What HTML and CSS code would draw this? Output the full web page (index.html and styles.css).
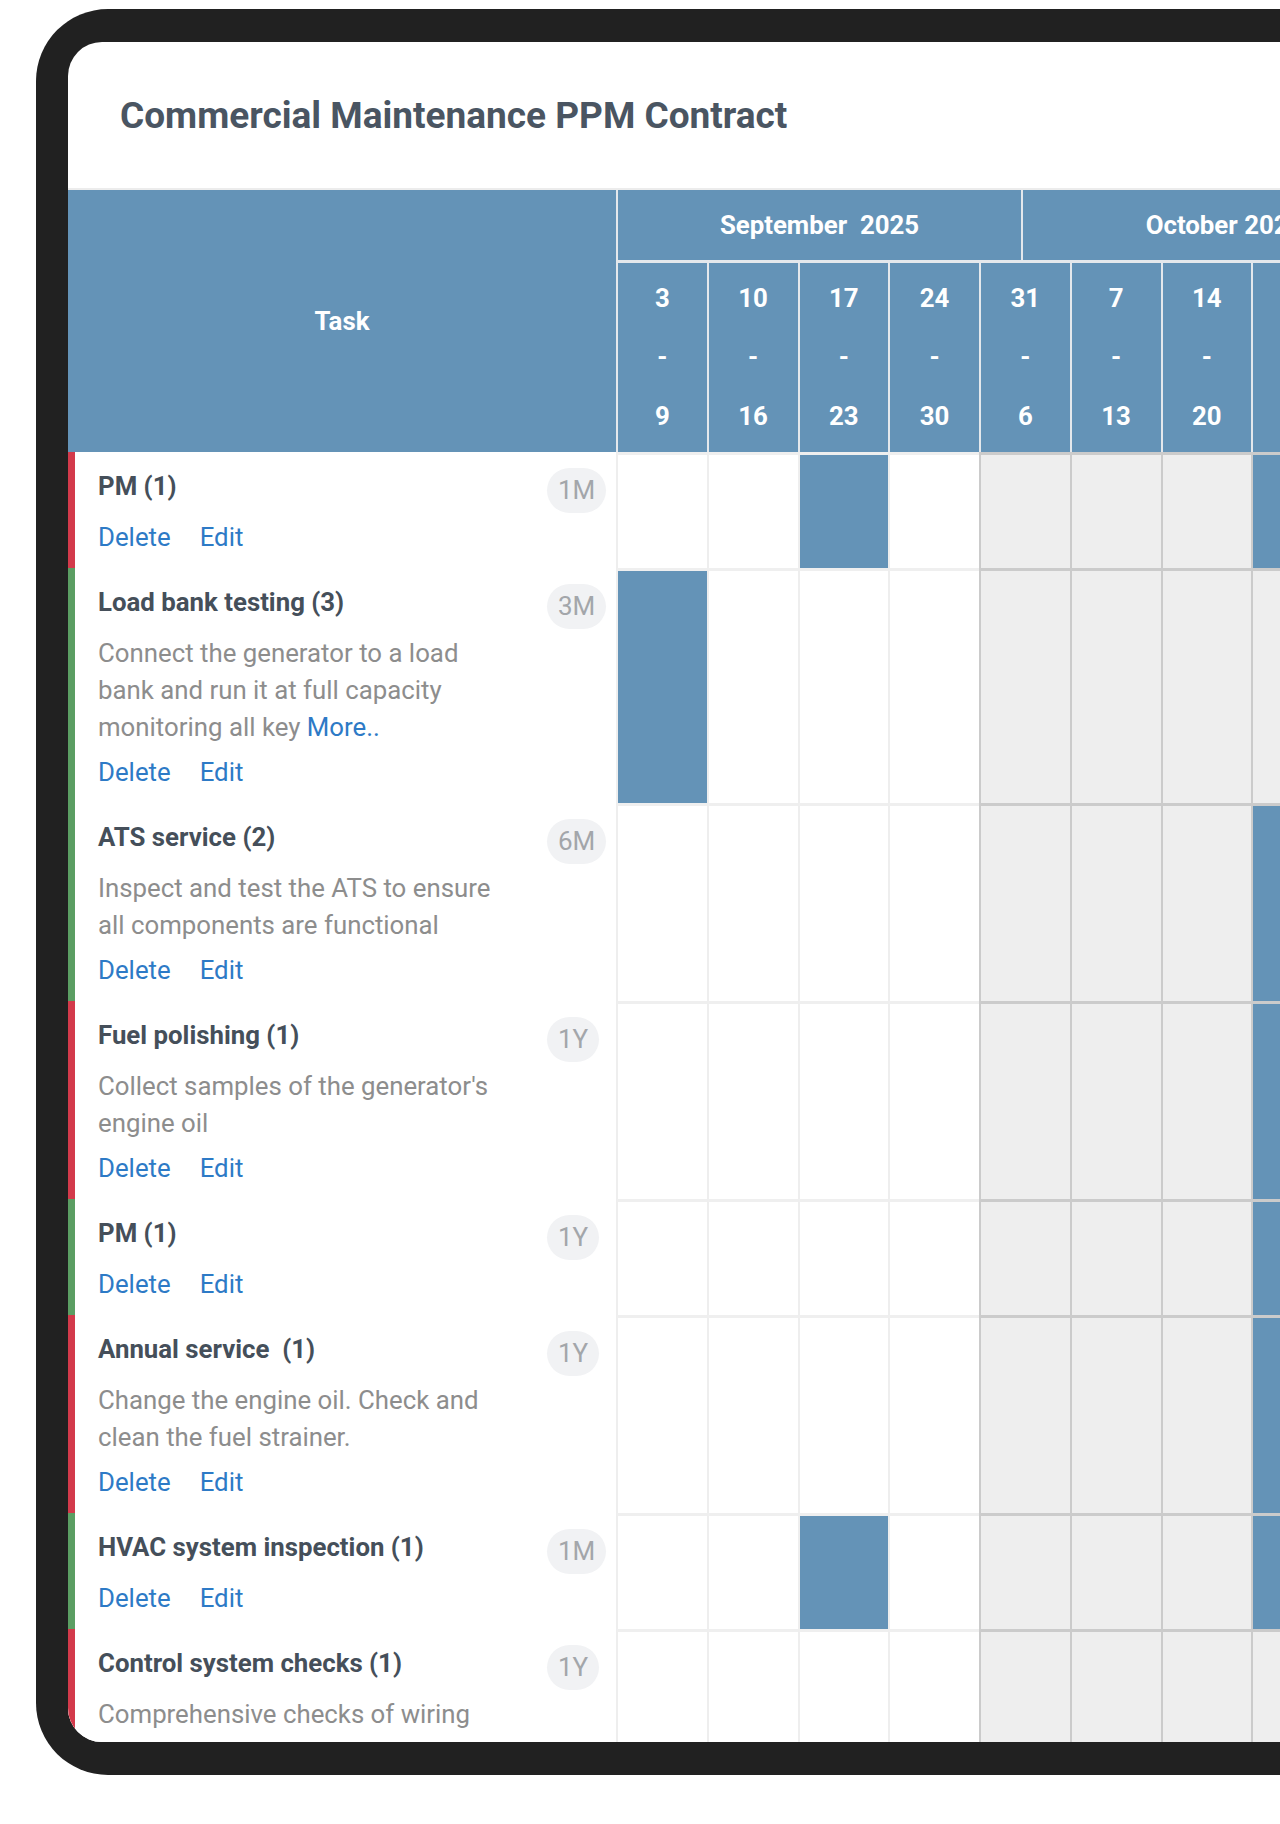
FILE: index.html
```html
<!DOCTYPE html>
<html lang="en">
<head>
<meta charset="utf-8">
<title>Commercial Maintenance PPM Contract</title>
<link rel="stylesheet" href="styles.css">
</head>
<body>
<div class="device">
  <div class="screen">
    <h1 class="title">Commercial Maintenance PPM Contract</h1>
    <div class="gantt">
      <div class="task-head">Task</div>
      <div class="months">
        <div class="month">September&nbsp; 2025</div>
        <div class="month">October 2025</div>
      </div>
      <div class="week">3<br>-<br>9</div>
      <div class="week">10<br>-<br>16</div>
      <div class="week">17<br>-<br>23</div>
      <div class="week">24<br>-<br>30</div>
      <div class="week">31<br>-<br>6</div>
      <div class="week">7<br>-<br>13</div>
      <div class="week">14<br>-<br>20</div>
      <div class="week">21<br>-<br>27</div>

      <!-- Row 1 -->
      <div class="task red">
        <div class="task-body">
          <div class="task-title">PM (1)</div>
          <div class="actions"><a class="link">Delete</a><a class="link">Edit</a></div>
        </div>
        <span class="badge">1M</span>
      </div>
      <div class="cell"></div><div class="cell"></div><div class="cell bar"></div><div class="cell"></div>
      <div class="cell off"></div><div class="cell off"></div><div class="cell off"></div><div class="cell off bar"></div>

      <!-- Row 2 -->
      <div class="task green">
        <div class="task-body">
          <div class="task-title">Load bank testing (3)</div>
          <p class="desc">Connect the generator to a load bank and run it at full capacity monitoring all key <a class="link">More..</a></p>
          <div class="actions"><a class="link">Delete</a><a class="link">Edit</a></div>
        </div>
        <span class="badge">3M</span>
      </div>
      <div class="cell bar"></div><div class="cell"></div><div class="cell"></div><div class="cell"></div>
      <div class="cell off"></div><div class="cell off"></div><div class="cell off"></div><div class="cell off"></div>

      <!-- Row 3 -->
      <div class="task green">
        <div class="task-body">
          <div class="task-title">ATS service (2)</div>
          <p class="desc">Inspect and test the ATS to ensure all components are functional</p>
          <div class="actions"><a class="link">Delete</a><a class="link">Edit</a></div>
        </div>
        <span class="badge">6M</span>
      </div>
      <div class="cell"></div><div class="cell"></div><div class="cell"></div><div class="cell"></div>
      <div class="cell off"></div><div class="cell off"></div><div class="cell off"></div><div class="cell off bar"></div>

      <!-- Row 4 -->
      <div class="task red">
        <div class="task-body">
          <div class="task-title">Fuel polishing (1)</div>
          <p class="desc">Collect samples of the generator's engine oil</p>
          <div class="actions"><a class="link">Delete</a><a class="link">Edit</a></div>
        </div>
        <span class="badge">1Y</span>
      </div>
      <div class="cell"></div><div class="cell"></div><div class="cell"></div><div class="cell"></div>
      <div class="cell off"></div><div class="cell off"></div><div class="cell off"></div><div class="cell off bar"></div>

      <!-- Row 5 -->
      <div class="task green">
        <div class="task-body">
          <div class="task-title">PM (1)</div>
          <div class="actions"><a class="link">Delete</a><a class="link">Edit</a></div>
        </div>
        <span class="badge">1Y</span>
      </div>
      <div class="cell"></div><div class="cell"></div><div class="cell"></div><div class="cell"></div>
      <div class="cell off"></div><div class="cell off"></div><div class="cell off"></div><div class="cell off bar"></div>

      <!-- Row 6 -->
      <div class="task red">
        <div class="task-body">
          <div class="task-title">Annual service&nbsp; (1)</div>
          <p class="desc">Change the engine oil. Check and clean the fuel strainer.</p>
          <div class="actions"><a class="link">Delete</a><a class="link">Edit</a></div>
        </div>
        <span class="badge">1Y</span>
      </div>
      <div class="cell"></div><div class="cell"></div><div class="cell"></div><div class="cell"></div>
      <div class="cell off"></div><div class="cell off"></div><div class="cell off"></div><div class="cell off bar"></div>

      <!-- Row 7 -->
      <div class="task green">
        <div class="task-body">
          <div class="task-title">HVAC system inspection (1)</div>
          <div class="actions"><a class="link">Delete</a><a class="link">Edit</a></div>
        </div>
        <span class="badge">1M</span>
      </div>
      <div class="cell"></div><div class="cell"></div><div class="cell bar"></div><div class="cell"></div>
      <div class="cell off"></div><div class="cell off"></div><div class="cell off"></div><div class="cell off bar"></div>

      <!-- Row 8 -->
      <div class="task red">
        <div class="task-body">
          <div class="task-title">Control system checks (1)</div>
          <p class="desc">Comprehensive checks of wiring</p>
          <div class="actions"><a class="link">Delete</a><a class="link">Edit</a></div>
        </div>
        <span class="badge">1Y</span>
      </div>
      <div class="cell"></div><div class="cell"></div><div class="cell"></div><div class="cell"></div>
      <div class="cell off"></div><div class="cell off"></div><div class="cell off"></div><div class="cell off"></div>
    </div>
  </div>
</div>
</body>
</html>
```

FILE: styles.css
```css
html, body {
  margin: 0;
  padding: 0;
  background: #ffffff;
  overflow: hidden;
}

body {
  font-family: Roboto, "Liberation Sans", Arial, sans-serif;
}

.device {
  margin: 9px 0 0 36px;
  width: 1420px;
  background: #212121;
  border-radius: 72px 0 0 72px;
  padding: 33px 0 33px 32px;
}

.screen {
  height: 1700px;
  background: #ffffff;
  border-radius: 34px 0 0 34px;
  overflow: hidden;
}

.title {
  margin: 0;
  height: 146px;
  padding-left: 52px;
  display: flex;
  align-items: center;
  font-size: 37px;
  font-weight: 700;
  color: #4a5562;
}

.gantt {
  display: grid;
  grid-template-columns: 548px repeat(8, 90.75px);
  grid-template-rows: 73px 189px;
  border-top: 2px solid #ececec;
  width: max-content;
}

.task-head {
  grid-column: 1;
  grid-row: 1 / span 2;
  background: #6493b7;
  color: #ffffff;
  display: flex;
  align-items: center;
  justify-content: center;
  font-size: 25.8px;
  font-weight: 700;
}

.months {
  grid-column: 2 / -1;
  grid-row: 1;
  display: flex;
  border-bottom: 3px solid #e4e8ec;
  overflow: hidden;
}

.month {
  flex: 0 0 405px;
  box-sizing: border-box;
  border-left: 2px solid #e4e8ec;
  background: #6493b7;
  color: #ffffff;
  font-size: 25.8px;
  font-weight: 700;
  display: flex;
  align-items: center;
  justify-content: center;
  white-space: nowrap;
}

.week {
  grid-row: 2;
  box-sizing: border-box;
  border-left: 2px solid #e4e8ec;
  background: #6493b7;
  color: #ffffff;
  font-size: 25.8px;
  font-weight: 700;
  line-height: 59px;
  padding: 6px 0;
  text-align: center;
}

.task {
  grid-column: 1;
  display: flex;
  align-items: flex-start;
  border-left: 7px solid;
  padding: 16px 10px 12px 23px;
  background: #ffffff;
}

.task.red { border-left-color: #d33a4b; }
.task.green { border-left-color: #5b9e63; }

.task-body {
  flex: 0 0 439px;
  min-width: 0;
}

.task-title {
  font-size: 25.8px;
  font-weight: 700;
  line-height: 36px;
  color: #454f5a;
  margin-bottom: 15px;
}

.desc {
  margin: 1px 0 8px;
  max-width: 402px;
  font-size: 25.8px;
  line-height: 37px;
  color: #8d8d8d;
}

.actions {
  display: flex;
  gap: 29px;
  font-size: 25.8px;
  line-height: 37px;
}

.link {
  color: #2d7ac6;
  text-decoration: none;
  cursor: pointer;
}

.badge {
  flex: none;
  margin-left: 10px;
  height: 45px;
  padding: 0 11px;
  border-radius: 23px;
  background: #f1f2f4;
  color: #a3a6aa;
  font-size: 26px;
  line-height: 45px;
}

.cell {
  box-sizing: border-box;
  border-left: 2px solid #eeeeee;
  border-top: 3px solid #efefef;
  background: #ffffff;
}

.cell.off {
  background: #eeeeee;
  border-left-color: #cbcbcb;
  border-top-color: #cbcbcb;
}

.cell.bar {
  background: #6493b7;
}
```
